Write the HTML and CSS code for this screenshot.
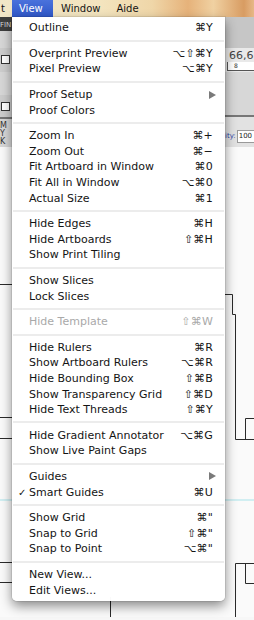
FILE: index.html
```html
<!DOCTYPE html>
<html lang="fr">
<head>
  <meta charset="utf-8">
  <title>Illustrator – menu View</title>
  <link rel="stylesheet" href="styles.css">
</head>
<body>
  <!-- Barre de menus -->
  <div class="menubar">
    <span class="mb-item mb-cut">t</span>
    <span class="mb-item active">View</span>
    <span class="mb-item">Window</span>
    <span class="mb-item">Aide</span>
  </div>

  <!-- Application derrière le menu -->
  <div class="workspace">
    <div class="strip">
      <div class="side left dark"><span class="tiny">FIN</span></div>
      <div class="side right grey1"></div>
    </div>
    <div class="strip h17">
      <div class="side left grey2"></div>
      <div class="side right grey1"></div>
    </div>
    <div class="strip h24">
      <div class="side left grey3"><span class="ico"></span></div>
      <div class="side right light">
        <span class="coord">66,6</span>
        <span class="ruler">8</span>
      </div>
    </div>
    <div class="strip h28">
      <div class="side left grey2"></div>
      <div class="side right grey2"></div>
    </div>
    <div class="strip h20">
      <div class="side left grey3"><span class="ico"></span></div>
      <div class="side right grey2 line-bottom"></div>
    </div>
    <div class="strip h30">
      <div class="side left grey2 line-top cmyk"><span>M</span><span>Y</span><span>K</span></div>
      <div class="side right grey4 opacity">
        <span class="opac">ity:</span><span class="field">100</span>
      </div>
    </div>

    <div class="canvas">
      <svg width="254" height="470" viewBox="0 150 254 470">
        <line x1="0" y1="503" x2="254" y2="503" stroke="#a8e3ea" stroke-width="1"/>
        <g fill="none" stroke="#2a2a2a" stroke-width="1">
          <path d="M0 287.5 H12"/>
          <path d="M0 420.5 H12 M0 441.5 H12"/>
          <path d="M0 565.5 H12 M0 585.5 H12"/>
          <path d="M225 297.5 H232.5 V317.5 H235.5 V442.5 H254"/>
          <path d="M245.5 442 V421.5 H254"/>
          <path d="M235.5 620 V566.5 H254 M245.5 566 V586.5 H254"/>
          <path d="M110.5 600 V620"/>
        </g>
      </svg>
    </div>
  </div>

  <!-- Menu déroulant View -->
  <div class="menu">
    <div class="row"><span class="label">Outline</span><span class="key">⌘Y</span></div>
    <div class="sep"></div>
    <div class="row"><span class="label">Overprint Preview</span><span class="key">⌥⇧⌘Y</span></div>
    <div class="row"><span class="label">Pixel Preview</span><span class="key">⌥⌘Y</span></div>
    <div class="sep"></div>
    <div class="row"><span class="label">Proof Setup</span><span class="arrow"></span></div>
    <div class="row"><span class="label">Proof Colors</span></div>
    <div class="sep"></div>
    <div class="row"><span class="label">Zoom In</span><span class="key">⌘+</span></div>
    <div class="row"><span class="label">Zoom Out</span><span class="key">⌘−</span></div>
    <div class="row"><span class="label">Fit Artboard in Window</span><span class="key">⌘0</span></div>
    <div class="row"><span class="label">Fit All in Window</span><span class="key">⌥⌘0</span></div>
    <div class="row"><span class="label">Actual Size</span><span class="key">⌘1</span></div>
    <div class="sep"></div>
    <div class="row"><span class="label">Hide Edges</span><span class="key">⌘H</span></div>
    <div class="row"><span class="label">Hide Artboards</span><span class="key">⇧⌘H</span></div>
    <div class="row"><span class="label">Show Print Tiling</span></div>
    <div class="sep"></div>
    <div class="row"><span class="label">Show Slices</span></div>
    <div class="row"><span class="label">Lock Slices</span></div>
    <div class="sep"></div>
    <div class="row disabled"><span class="label">Hide Template</span><span class="key">⇧⌘W</span></div>
    <div class="sep"></div>
    <div class="row"><span class="label">Hide Rulers</span><span class="key">⌘R</span></div>
    <div class="row"><span class="label">Show Artboard Rulers</span><span class="key">⌥⌘R</span></div>
    <div class="row"><span class="label">Hide Bounding Box</span><span class="key">⇧⌘B</span></div>
    <div class="row"><span class="label">Show Transparency Grid</span><span class="key">⇧⌘D</span></div>
    <div class="row"><span class="label">Hide Text Threads</span><span class="key">⇧⌘Y</span></div>
    <div class="sep"></div>
    <div class="row"><span class="label">Hide Gradient Annotator</span><span class="key">⌥⌘G</span></div>
    <div class="row"><span class="label">Show Live Paint Gaps</span></div>
    <div class="sep"></div>
    <div class="row"><span class="label">Guides</span><span class="arrow"></span></div>
    <div class="row checked"><span class="label">Smart Guides</span><span class="key">⌘U</span></div>
    <div class="sep"></div>
    <div class="row"><span class="label">Show Grid</span><span class="key">⌘"</span></div>
    <div class="row"><span class="label">Snap to Grid</span><span class="key">⇧⌘"</span></div>
    <div class="row"><span class="label">Snap to Point</span><span class="key">⌥⌘"</span></div>
    <div class="sep"></div>
    <div class="row"><span class="label">New View...</span></div>
    <div class="row"><span class="label">Edit Views...</span></div>
  </div>
</body>
</html>
```

FILE: styles.css
```css
/* Reset */
* { box-sizing: border-box; margin: 0; padding: 0; }
:root {
  --menu-text: #141414;
  --menu-muted: #a9a9a9;
  --hilite: #3a62d2;
}
html, body {
  width: 254px;
  height: 620px;
  overflow: hidden;
}
body {
  position: relative;
  font-family: 'DejaVu Sans', 'Liberation Sans', sans-serif;
  background: #f7f7f7;
}

/* Barre de menus */
.menubar {
  height: 17px;
  display: flex;
  align-items: stretch;
  background: linear-gradient(90deg, #f1e6c8 0%, #f3e4be 40%, #efd6a8 60%, #e6b27a 74%, #f0d1a2 84%, #d89c62 96%, #e7b887 100%);
  font-size: 10px;
  color: #141414;
}
.mb-item {
  display: flex;
  align-items: center;
  padding: 0 8px;
}
.mb-cut { padding: 0 0 0 1px; width: 12px; }
.mb-item.active {
  background: linear-gradient(#4a72dc, #2f57c8);
  color: #fff;
  padding: 0 0 0 7px;
  width: 41px;
}

/* Application (arrière-plan) */
.strip {
  display: flex;
  justify-content: space-between;
  height: 14px;
}
.strip.h17 { height: 17px; }
.strip.h24 { height: 24px; }
.strip.h28 { height: 23px; }
.strip.h20 { height: 22px; }
.strip.h30 { height: 30px; }
.side { position: relative; overflow: hidden; }
.side.left { width: 12px; }
.side.right { width: 29px; }
.dark { background: #3e3e3e; }
.grey1 { background: #c6c6c6; }
.grey2 { background: #d7d7d7; }
.grey3 { background: #cdcdcd; }
.grey4 { background: #e2e2e2; }
.light { background: #e9e9e9; }
.line-bottom { border-bottom: 2px solid #777; }
.line-top { border-top: 2px solid #777; }
.tiny {
  display: block;
  font-size: 7px;
  color: #d8d8d8;
  padding: 4px 0 0 0;
}
.ico {
  display: block;
  width: 9px;
  height: 9px;
  margin: 7px 0 0 1px;
  border: 1px solid #333;
  background: #fff;
}
.cmyk {
  display: flex;
  flex-direction: column;
  font-size: 8px;
  line-height: 8px;
  color: #333;
  padding-top: 3px;
}
.coord {
  display: block;
  font-size: 11px;
  color: #444;
  padding: 1px 0 0 4px;
}
.ruler {
  display: block;
  height: 9px;
  margin-left: 2px;
  background: #fff;
  border-left: 1px solid #555;
  border-bottom: 1px solid #555;
  font-size: 6px;
  line-height: 7px;
  padding-left: 6px;
  color: #333;
}
.opacity {
  display: flex;
  align-items: center;
  gap: 1px;
  padding-top: 8px;
}
.opac {
  font-size: 7px;
  color: #2c3fa8;
}
.field {
  font-size: 7px;
  line-height: 11px;
  padding: 0 0 0 1px;
  background: #fff;
  border: 1px solid #999;
  border-right: none;
  color: #222;
  flex: 1;
}
.canvas {
  height: 470px;
  background: #fafafa;
}
.canvas svg { display: block; }

/* Menu déroulant */
.menu {
  position: absolute;
  left: 12px;
  top: 17px;
  width: 213px;
  padding: 3px 0 3px;
  background: rgba(255, 255, 255, 0.98);
  border-radius: 0 0 5px 5px;
  box-shadow: 0 5px 12px rgba(0, 0, 0, 0.45), 0 0 0 1px rgba(0, 0, 0, 0.08);
  font-size: 11px;
  color: var(--menu-text);
}
.row {
  position: relative;
  display: flex;
  justify-content: space-between;
  align-items: center;
  height: 15.6px;
  padding: 0 12px 0 17px;
  white-space: nowrap;
}
.row.disabled { color: var(--menu-muted); }
.row.checked::before {
  content: "✓";
  position: absolute;
  left: 6px;
  font-size: 10px;
}
.key { letter-spacing: 0.2px; }
.arrow {
  width: 0;
  height: 0;
  margin-right: -3px;
  border-left: 7px solid #7a7a7a;
  border-top: 4px solid transparent;
  border-bottom: 4px solid transparent;
}
.sep {
  height: 10px;
  position: relative;
}
.sep::after {
  content: "";
  position: absolute;
  left: 1px;
  right: 1px;
  top: 4px;
  height: 2px;
  background: #ececec;
}
```
